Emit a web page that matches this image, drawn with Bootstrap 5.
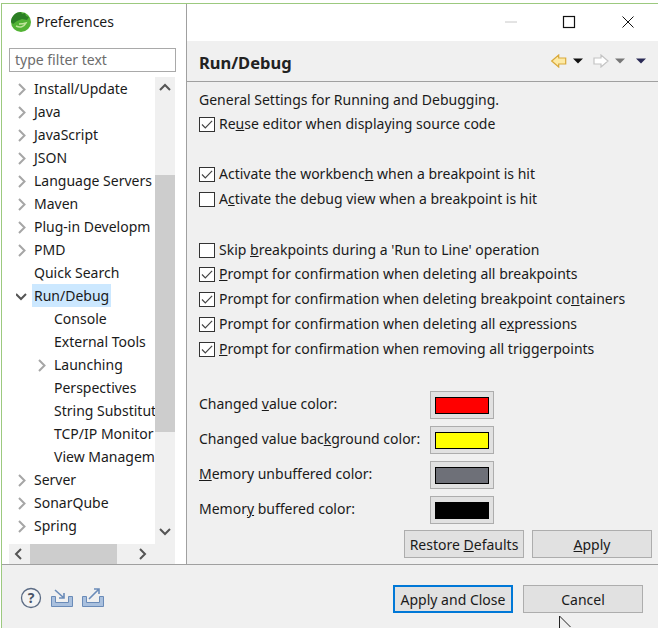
<!DOCTYPE html>
<html lang="en"><head><meta charset="utf-8"><title>Preferences</title>
<link href="https://cdn.jsdelivr.net/npm/bootstrap@5.3.0/dist/css/bootstrap.min.css" rel="stylesheet">
<style>
html,body{height:628px;overflow:hidden;background:#fff}
body{font-family:"Noto Sans","Open Sans",sans-serif;font-size:14px;color:#1a1a1a;line-height:1.2}
.win{height:625px;margin:3px 0 0 1px;border-top:1px solid #9cc97f;border-left:1px solid #9cc97f;position:relative}
.mainarea{height:560px}
.leftpane{width:184px;background:#fff;padding:44px 0 0 7px}
.filterbox{width:167px;height:24px;border:1px solid #a9a9a9;color:#6d6d6d;padding:0 5px;line-height:22px;font-size:14px;margin-bottom:5px}
.treewrap{width:166px;height:467px}
.treelist{width:146px;height:467px;overflow:hidden}
.trow{height:23px;line-height:23px;white-space:nowrap}
.tw{flex:0 0 23px;padding-left:7px}
.tw2{flex:0 0 43px;padding-left:27px}
.tw svg{display:block}
.ttext{padding:0 2px}
.tsel{background:#cce8ff}
.vbar{width:20px;background:#f0f0f0;position:relative}
.vthumb{height:257px;background:#cdcdcd;margin:98px 0 0 0}
.scarrow{position:absolute;left:4px}
.hbar{width:166px;height:20px;background:#f0f0f0;position:relative}
.hthumb{width:87px;height:100%;background:#cdcdcd;margin:0 0 0 21px}
.rightpane{width:472px;background:#f0f0f0;border-left:1px solid #a0a0a0}
.titlegap{height:37px;background:#fff}
.phead{height:41px;border-bottom:1px solid #a0a0a0;padding:0 11px 0 12px}
.ptitle{font-size:16.5px;font-weight:700;color:#222;padding-top:4px}
.pbody{padding:9px 0 0 12px}
.desc{height:21px;line-height:18px}
.ck{height:25px}
.ck.shortrow{height:24px}
.ck input.form-check-input{width:16px;height:15px;margin:0 4px 0 0;border:1px solid #333;border-radius:0;background-color:#fff;flex:none}
.ck input.form-check-input:checked{background-color:#fff;border-color:#333;background-image:url("data:image/svg+xml,%3csvg xmlns='http://www.w3.org/2000/svg' viewBox='0 0 16 15'%3e%3cpath fill='none' stroke='%23444' stroke-width='1.2' d='M3 7.500l3.300 3.300 6.800-7'/%3e%3c/svg%3e");background-size:16px 15px}
.ck label{color:#1a1a1a}
.sp1{height:25px}.sp2{height:26px}.sp3{height:25px}
.colrow{height:35px}
.collabel{width:231px}
.colbtn{width:64px;height:28px;background:#e1e1e1;border:1px solid #adadad;padding:5px 4px;border-radius:0}
.colbtn span{display:block;height:17px;border:1px solid #000}
.swred{background:#f00}.swyel{background:#ff0}.swgry{background:#6e7078}.swblk{background:#000}
.restrow{padding:3px 6px 0 0}
.btn.eclbtn{width:120px;height:28px;background:#e1e1e1;border:1px solid #adadad;border-radius:0;color:#1a1a1a;font-size:14px;padding:1px 0 0;line-height:26px}
.btn.eclbtn.primarybtn{border:2px solid #0078d7;line-height:24px}
.footbar{height:64px;background:#f0f0f0;border-top:1px solid #a0a0a0;padding:20px 15px 0 18px}
.footbtns{gap:10px}
.cursorpt{position:absolute;left:558px;top:615px}
.winbtns{position:absolute;right:0;top:0;height:37px}
.apptitle{position:absolute;left:8px;top:7px;font-size:14px}
</style></head><body>
<div class="win">
  <div class="apptitle d-flex align-items-center gap-1">
    <svg width="22" height="22" viewBox="0 0 22 22"><circle cx="11" cy="11" r="10" fill="#52b334"/><path d="M1 11C1 6 5 1 11 1l1 2 3-1 1 3 3 1-2 3-5-1-5 2-4 3z" fill="#2c7f25"/><path d="M6 15c4 2 8 1 10-3-3 1-5 1-7 1" fill="none" stroke="#bfe59b" stroke-width="1.500"/></svg>
    <span>Preferences</span>
  </div>
  <div class="winbtns d-flex">
    <svg width="158" height="37" viewBox="0 0 158 37"><path d="M5 18h12" stroke="#c8c8c8" stroke-width="1"/><rect x="63.500" y="12.500" width="11" height="11" fill="none" stroke="#111" stroke-width="1.200"/><path d="M122.500 12.500l11 11M133.500 12.500l-11 11" stroke="#111" stroke-width="1"/></svg>
  </div>
  <div class="mainarea d-flex">
    <div class="leftpane">
      <div class="filterbox">type filter text</div>
      <div class="treewrap d-flex">
        <div class="treelist">
          <div class="trow d-flex"><span class="tw"><svg width="10" height="23" viewBox="0 0 10 23"><path d="M3 7l5.500 5.500L3 18" fill="none" stroke="#a6a6a6" stroke-width="2"/></svg></span><span class="ttext">Install/Update</span></div>
          <div class="trow d-flex"><span class="tw"><svg width="10" height="23" viewBox="0 0 10 23"><path d="M3 7l5.500 5.500L3 18" fill="none" stroke="#a6a6a6" stroke-width="2"/></svg></span><span class="ttext">Java</span></div>
          <div class="trow d-flex"><span class="tw"><svg width="10" height="23" viewBox="0 0 10 23"><path d="M3 7l5.500 5.500L3 18" fill="none" stroke="#a6a6a6" stroke-width="2"/></svg></span><span class="ttext">JavaScript</span></div>
          <div class="trow d-flex"><span class="tw"><svg width="10" height="23" viewBox="0 0 10 23"><path d="M3 7l5.500 5.500L3 18" fill="none" stroke="#a6a6a6" stroke-width="2"/></svg></span><span class="ttext">JSON</span></div>
          <div class="trow d-flex"><span class="tw"><svg width="10" height="23" viewBox="0 0 10 23"><path d="M3 7l5.500 5.500L3 18" fill="none" stroke="#a6a6a6" stroke-width="2"/></svg></span><span class="ttext">Language Servers</span></div>
          <div class="trow d-flex"><span class="tw"><svg width="10" height="23" viewBox="0 0 10 23"><path d="M3 7l5.500 5.500L3 18" fill="none" stroke="#a6a6a6" stroke-width="2"/></svg></span><span class="ttext">Maven</span></div>
          <div class="trow d-flex"><span class="tw"><svg width="10" height="23" viewBox="0 0 10 23"><path d="M3 7l5.500 5.500L3 18" fill="none" stroke="#a6a6a6" stroke-width="2"/></svg></span><span class="ttext">Plug-in Developm</span></div>
          <div class="trow d-flex"><span class="tw"><svg width="10" height="23" viewBox="0 0 10 23"><path d="M3 7l5.500 5.500L3 18" fill="none" stroke="#a6a6a6" stroke-width="2"/></svg></span><span class="ttext">PMD</span></div>
          <div class="trow d-flex"><span class="tw"></span><span class="ttext">Quick Search</span></div>
          <div class="trow d-flex"><span class="tw"><svg width="12" height="23" viewBox="0 0 12 23"><path d="M0 10l5 5 5-5" fill="none" stroke="#555" stroke-width="2"/></svg></span><span class="ttext tsel">Run/Debug</span></div>
          <div class="trow d-flex"><span class="tw2"></span><span class="ttext">Console</span></div>
          <div class="trow d-flex"><span class="tw2"></span><span class="ttext">External Tools</span></div>
          <div class="trow d-flex"><span class="tw tw2"><svg width="10" height="23" viewBox="0 0 10 23"><path d="M3 7l5.500 5.500L3 18" fill="none" stroke="#a6a6a6" stroke-width="2"/></svg></span><span class="ttext">Launching</span></div>
          <div class="trow d-flex"><span class="tw2"></span><span class="ttext">Perspectives</span></div>
          <div class="trow d-flex"><span class="tw2"></span><span class="ttext">String Substitut</span></div>
          <div class="trow d-flex"><span class="tw2"></span><span class="ttext">TCP/IP Monitor</span></div>
          <div class="trow d-flex"><span class="tw2"></span><span class="ttext">View Managem</span></div>
          <div class="trow d-flex"><span class="tw"><svg width="10" height="23" viewBox="0 0 10 23"><path d="M3 7l5.500 5.500L3 18" fill="none" stroke="#a6a6a6" stroke-width="2"/></svg></span><span class="ttext">Server</span></div>
          <div class="trow d-flex"><span class="tw"><svg width="10" height="23" viewBox="0 0 10 23"><path d="M3 7l5.500 5.500L3 18" fill="none" stroke="#a6a6a6" stroke-width="2"/></svg></span><span class="ttext">SonarQube</span></div>
          <div class="trow d-flex"><span class="tw"><svg width="10" height="23" viewBox="0 0 10 23"><path d="M3 7l5.500 5.500L3 18" fill="none" stroke="#a6a6a6" stroke-width="2"/></svg></span><span class="ttext">Spring</span></div>
        </div>
        <div class="vbar">
          <svg class="scarrow" style="top:6px" width="12" height="8" viewBox="0 0 12 8"><path d="M1 7l5-5 5 5" fill="none" stroke="#555" stroke-width="2"/></svg>
          <div class="vthumb"></div>
          <svg class="scarrow" style="top:451px" width="12" height="8" viewBox="0 0 12 8"><path d="M1 1l5 5 5-5" fill="none" stroke="#555" stroke-width="2"/></svg>
        </div>
      </div>
      <div class="hbar">
        <svg class="scarrow" style="top:4px;left:5px" width="8" height="12" viewBox="0 0 8 12"><path d="M7 1L2 6l5 5" fill="none" stroke="#555" stroke-width="2"/></svg>
        <div class="hthumb"></div>
        <svg class="scarrow" style="top:4px;left:130px" width="8" height="12" viewBox="0 0 8 12"><path d="M1 1l5 5-5 5" fill="none" stroke="#555" stroke-width="2"/></svg>
      </div>
    </div>
    <div class="rightpane">
      <div class="titlegap"></div>
      <div class="phead d-flex align-items-center justify-content-between">
        <span class="ptitle">Run/Debug</span>
        <svg width="96" height="14" viewBox="0 0 96 14"><path d="M.7 7l7-6v3h7v6h-7v3z" fill="#fdeaa6" stroke="#d9a93a" stroke-width="1.200"/><path d="M22 4.500h10l-5 5z" fill="#111"/><path d="M57 7l-7-6v3h-7v6h7v3z" fill="#fff" stroke="#c4c4c4" stroke-width="1.200"/><path d="M64 4.500h10l-5 5z" fill="#777"/><path d="M85 4.500h10l-5 5z" fill="#2a2a55"/></svg>
      </div>
      <div class="pbody">
        <div class="desc">General Settings for Running and Debugging.</div>
        <div class="ck d-flex align-items-center"><input class="form-check-input" type="checkbox" checked><label>Re<u>u</u>se editor when displaying source code</label></div>
        <div class="sp1"></div>
        <div class="ck d-flex align-items-center"><input class="form-check-input" type="checkbox" checked><label>Activate the workbenc<u>h</u> when a breakpoint is hit</label></div>
        <div class="ck d-flex align-items-center"><input class="form-check-input" type="checkbox"><label>A<u>c</u>tivate the debug view when a breakpoint is hit</label></div>
        <div class="sp2"></div>
        <div class="ck shortrow d-flex align-items-center"><input class="form-check-input" type="checkbox"><label>Skip <u>b</u>reakpoints during a 'Run to Line' operation</label></div>
        <div class="ck d-flex align-items-center"><input class="form-check-input" type="checkbox" checked><label><u>P</u>rompt for confirmation when deleting all breakpoints</label></div>
        <div class="ck d-flex align-items-center"><input class="form-check-input" type="checkbox" checked><label>Prompt for confirmation when deleting breakpoint co<u>n</u>tainers</label></div>
        <div class="ck d-flex align-items-center"><input class="form-check-input" type="checkbox" checked><label>Prompt for confirmation when deleting all e<u>x</u>pressions</label></div>
        <div class="ck d-flex align-items-center"><input class="form-check-input" type="checkbox" checked><label><u>P</u>rompt for confirmation when removing all triggerpoints</label></div>
        <div class="sp3"></div>
        <div class="colrow d-flex align-items-center"><span class="collabel">Changed <u>v</u>alue color:</span><div class="colbtn"><span class="swred"></span></div></div>
        <div class="colrow d-flex align-items-center"><span class="collabel">Changed value bac<u>k</u>ground color:</span><div class="colbtn"><span class="swyel"></span></div></div>
        <div class="colrow d-flex align-items-center"><span class="collabel"><u>M</u>emory unbuffered color:</span><div class="colbtn"><span class="swgry"></span></div></div>
        <div class="colrow d-flex align-items-center"><span class="collabel">Memor<u>y</u> buffered color:</span><div class="colbtn"><span class="swblk"></span></div></div>
      </div>
      <div class="restrow d-flex justify-content-end gap-2">
        <button class="btn eclbtn" type="button">Restore <u>D</u>efaults</button>
        <button class="btn eclbtn" type="button"><u>A</u>pply</button>
      </div>
    </div>
  </div>
  <div class="footbar d-flex justify-content-between">
    <svg width="86" height="24" viewBox="0 0 86 24"><circle cx="11" cy="13" r="9.500" fill="#f4f4f4" stroke="#5b6b84" stroke-width="1.300"/><text x="11" y="18" font-family="Noto Sans" font-size="14" font-weight="700" text-anchor="middle" fill="#4a5568">?</text><path d="M31.500 11.500h4v6h13v-6h4v10h-21z" fill="#a9c0de" stroke="#6a8bb8"/><path d="M35 5l9 8M44 8v5h-5" fill="none" stroke="#6a8bb8" stroke-width="1.600"/><path d="M62.500 11.500h4v6h13v-6h4v10h-21z" fill="#a9c0de" stroke="#6a8bb8"/><path d="M69 14l10-10M74 4h5v5" fill="none" stroke="#6a8bb8" stroke-width="1.600"/></svg>
    <div class="d-flex footbtns">
      <button class="btn eclbtn primarybtn" type="button">Apply and Close</button>
      <button class="btn eclbtn" type="button">Cancel</button>
    </div>
  </div>
</div>
<svg class="cursorpt" width="14" height="13" viewBox="0 0 14 13"><path d="M1.500 1v12M1.500 1l11 11" stroke="#222" fill="none"/></svg>
</body></html>
